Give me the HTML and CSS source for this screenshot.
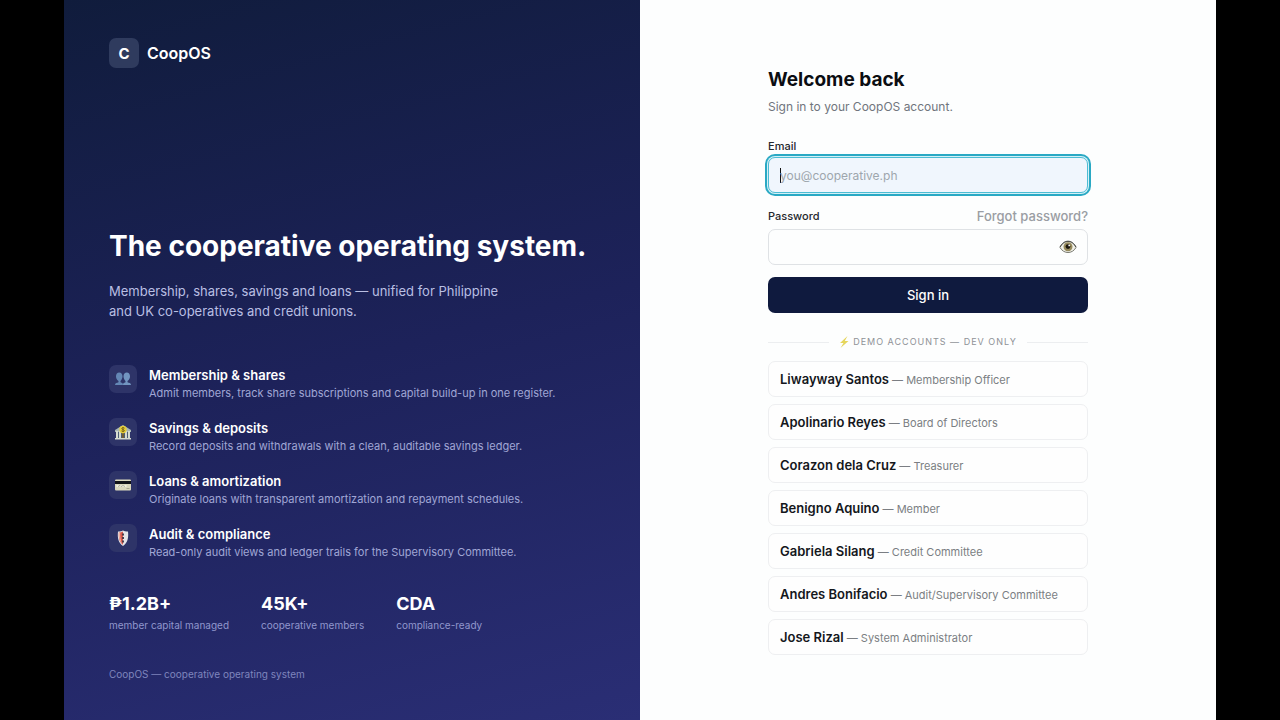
FILE: index.html
```html
<!DOCTYPE html>
<html lang="en">
  <head>
    <meta charset="utf-8">
    <meta name="viewport" content="width=device-width, initial-scale=1">
    <title>Sign in - CoopOS</title>
    <link rel="stylesheet" href="styles.css">
  </head>
  <body>
    <div class="auth">
      <section class="brand-panel">
        <div class="brand">
          <span class="brand-mark">C</span>
          <span>CoopOS</span>
        </div>

        <div class="pitch">
          <h1>The cooperative operating system.</h1>
          <p class="lead">Membership, shares, savings and loans — unified for Philippine and UK co-operatives and credit unions.</p>

          <ul class="features">
            <li>
              <span class="feature-icon">
                <svg viewBox="0 0 18 18" width="18" height="18" aria-hidden="true">
                  <path fill="#6487b5" d="M1 15c0-2 2-2 3.500-2.700V11C2.600 9.600 2 8 2 6.200 2 4 3.300 2.500 5.200 2.500S8.500 4 8.500 6.200c0 1.800-.7 3.400-2 4.800v1.300C8 13 9 13 9 15z"/>
                  <path fill="#7295c0" d="M9 15c0-2 1-2 2.500-2.700V11c-1.300-1.400-2-3-2-4.800C9.500 4 10.900 2.500 12.800 2.500S16 4 16 6.200c0 1.800-.6 3.400-2.500 4.800v1.300C15 13 17 13 17 15z"/>
                </svg>
              </span>
              <div>
                <h2>Membership &amp; shares</h2>
                <p>Admit members, track share subscriptions and capital build-up in one register.</p>
              </div>
            </li>
            <li>
              <span class="feature-icon">
                <svg viewBox="0 0 18 18" width="18" height="18" aria-hidden="true">
                  <path fill="#a9b7b4" d="M1 7l8-5 8 5v2H1z"/>
                  <path fill="#4d5f74" d="M2 9h14v6H2z"/>
                  <path fill="#d5dbd1" d="M2 8h2v7H2zM5 8h2v7H5zM11 8h2v7h-2zM14 8h2v7h-2zM1 15h16v1.500H1z"/>
                  <path fill="#725f35" d="M8 10h2v5H8z"/>
                  <circle cx="9" cy="6.500" r="3.700" fill="#e5cf3c"/>
                  <path fill="none" stroke="#7d6715" stroke-width="1" d="M10.500 5.200C9.500 4.300 7.800 4.500 7.800 5.600c0 1.300 2.600.7 2.600 2 0 1.100-1.900 1.200-2.900.3M9 4v5"/>
                </svg>
              </span>
              <div>
                <h2>Savings &amp; deposits</h2>
                <p>Record deposits and withdrawals with a clean, auditable savings ledger.</p>
              </div>
            </li>
            <li>
              <span class="feature-icon">
                <svg viewBox="0 0 18 18" width="18" height="18" aria-hidden="true">
                  <rect x="1" y="3.500" width="16" height="11" rx="1" fill="#d9d7bd"/>
                  <path fill="#111318" d="M1 5h16v3H1z"/>
                  <path fill="#f0efdf" d="M2.500 9h10v2h-10z"/>
                  <path fill="none" stroke="#8f907f" stroke-width=".7" d="M4 10.500l2-1 1 1 2-1 2 1M12.500 12.500h3"/>
                </svg>
              </span>
              <div>
                <h2>Loans &amp; amortization</h2>
                <p>Originate loans with transparent amortization and repayment schedules.</p>
              </div>
            </li>
            <li>
              <span class="feature-icon">
                <svg viewBox="0 0 18 18" width="18" height="18" aria-hidden="true">
                  <path fill="#e4e5e8" d="M9 1.500c1.500 1 3.300 1.200 5 1 .7 6-.3 11.500-5 14.500-4.700-3-5.700-8.500-5-14.500 1.700.2 3.500 0 5-1z"/>
                  <path fill="#d7584b" d="M9 2.500v13.300C5.400 13 4.400 9 4.900 3.500 6.400 3.600 7.800 3.200 9 2.500z"/>
                  <path fill="#4b3c4b" d="M8 4.500h2v2H8zM8 8h2v2H8zM8 11.500h2v2H8z"/>
                  <path fill="#f0b1a5" d="M5 3.500h1.300c-.3 4.200.2 7.600 1.600 11C5.500 12 4.600 8.500 5 3.500z"/>
                </svg>
              </span>
              <div>
                <h2>Audit &amp; compliance</h2>
                <p>Read-only audit views and ledger trails for the Supervisory Committee.</p>
              </div>
            </li>
          </ul>

          <dl class="stats">
            <div>
              <dt>₱1.2B+</dt>
              <dd>member capital managed</dd>
            </div>
            <div>
              <dt>45K+</dt>
              <dd>cooperative members</dd>
            </div>
            <div>
              <dt>CDA</dt>
              <dd>compliance-ready</dd>
            </div>
          </dl>
        </div>

        <footer>CoopOS — cooperative operating system</footer>
      </section>

      <main class="form-panel">
        <div class="form-wrap">
          <h2 class="title">Welcome back</h2>
          <p class="subtitle">Sign in to your CoopOS account.</p>

          <form>
            <div class="label-row">
              <label for="email">Email</label>
            </div>
            <input class="email" id="email" type="email" placeholder="you@cooperative.ph" autofocus>

            <div class="label-row">
              <label for="password">Password</label>
              <a href="#">Forgot password?</a>
            </div>
            <div class="password-field">
              <input id="password" type="password">
              <button class="reveal" type="button" aria-label="Show password">
                <svg viewBox="0 0 18 14" width="18" height="14" aria-hidden="true">
                  <path fill="#f1f1e9" stroke="#77786f" stroke-width="1" d="M1 7.500C3 3.500 6 1.500 9 1.500s6 2 8 6c-2 3.500-5 5-8 5s-6-1.500-8-5z"/>
                  <circle cx="9" cy="6.800" r="4.500" fill="#968a5c"/>
                  <circle cx="9" cy="6.600" r="2.400" fill="#1c170f"/>
                  <circle cx="10.200" cy="5.400" r=".9" fill="#fff"/>
                  <path fill="none" stroke="#44453f" stroke-width="1" d="M1 7C3 3 6 1.200 9 1.200s6 1.800 8 5.800"/>
                </svg>
              </button>
            </div>

            <button class="submit" type="submit">Sign in</button>
          </form>

          <div class="divider">
            <span>
              <svg viewBox="0 0 10 12" width="10" height="12" aria-hidden="true">
                <path fill="#e6d65c" d="M8.500 0L1 7h3.500L1.500 12 9.500 5H5.800z"/>
              </svg>
              Demo accounts — dev only
            </span>
          </div>

          <div class="accounts">
            <button type="button"><strong>Liwayway Santos</strong> — Membership Officer</button>
            <button type="button"><strong>Apolinario Reyes</strong> — Board of Directors</button>
            <button type="button"><strong>Corazon dela Cruz</strong> — Treasurer</button>
            <button type="button"><strong>Benigno Aquino</strong> — Member</button>
            <button type="button"><strong>Gabriela Silang</strong> — Credit Committee</button>
            <button type="button"><strong>Andres Bonifacio</strong> — Audit/Supervisory Committee</button>
            <button type="button"><strong>Jose Rizal</strong> — System Administrator</button>
          </div>
        </div>
      </main>
    </div>
  </body>
</html>
```
FILE: styles.css
```css
* {
  box-sizing: border-box;
}

body {
  margin: 0;
  padding: 0 5%;
  background: #000;
  font-family: Inter, "Liberation Sans", sans-serif;
}

h1,
h2,
p,
ul,
dl,
dd {
  margin: 0;
  padding: 0;
}

button,
input {
  font-family: inherit;
}

.auth {
  display: grid;
  grid-template-columns: minmax(0, 1fr) minmax(0, 1fr);
  min-height: 100vh;
}

/* left side */

.brand-panel {
  display: flex;
  flex-direction: column;
  padding: 38px 45px;
  background: linear-gradient(165deg, #101c3c 0%, #1d225a 50%, #2a2e75 100%);
  color: #fff;
}

.brand {
  display: flex;
  align-items: center;
  gap: 8px;
  font-size: 16px;
  font-weight: 600;
}

.brand-mark {
  display: flex;
  align-items: center;
  justify-content: center;
  width: 30px;
  height: 30px;
  border-radius: 7px;
  background: #2f3b5e;
  font-size: 15px;
  font-weight: 700;
}

.pitch {
  margin-top: auto;

  h1 {
    font-size: 28px;
    line-height: 36px;
    font-weight: 700;
    white-space: nowrap;
  }
}

.lead {
  max-width: 390px;
  margin-top: 17px;
  color: #b9bfe3;
  font-size: 13px;
  line-height: 20px;
}

.features {
  display: grid;
  gap: 17px;
  margin-top: 44px;
  list-style: none;

  li {
    display: flex;
    gap: 12px;
  }

  h2 {
    font-size: 13px;
    line-height: 20px;
    font-weight: 600;
  }

  p {
    color: #a0a6d5;
    font-size: 11px;
    line-height: 16px;
  }
}

.feature-icon {
  display: flex;
  align-items: center;
  justify-content: center;
  width: 28px;
  height: 28px;
  border-radius: 7px;
  background: #2e3468;
}

.stats {
  display: flex;
  gap: 32px;
  margin-top: 32px;

  dt {
    font-size: 18px;
    line-height: 24px;
    font-weight: 700;
  }

  dd {
    margin-top: 1px;
    color: #9197cd;
    font-size: 10px;
    line-height: 16px;
  }
}

.brand-panel footer {
  margin-top: 33px;
  color: #7f85bd;
  font-size: 10px;
  line-height: 16px;
}

/* right side */

.form-panel {
  display: flex;
  align-items: center;
  justify-content: center;
  padding-top: 2px;
  background: #fdfefe;
}

.form-wrap {
  width: 100%;
  max-width: 320px;
}

.title {
  color: #0b0d12;
  font-size: 19px;
  line-height: 26px;
  font-weight: 700;
}

.subtitle {
  margin: 4px 0 18px;
  color: #70757d;
  font-size: 12px;
  line-height: 20px;
}

.label-row {
  display: flex;
  align-items: center;
  justify-content: space-between;
  height: 22px;

  label {
    color: #25282d;
    font-size: 11px;
    font-weight: 500;
  }

  a {
    color: #9a9da3;
    font-size: 13px;
    font-weight: 500;
    text-decoration: none;
  }
}

input {
  display: block;
  width: 100%;
  height: 36px;
  padding: 0 11px;
  border: 1px solid #dfe2e5;
  border-radius: 7px;
  outline: none;
  background: #fdfefe;
  font-size: 12px;

  &::placeholder {
    color: #9ea6ad;
  }
}

/* focused look, with a caret that does not blink */
.email {
  margin-bottom: 12px;
  border-color: #4dbcd4;
  background: linear-gradient(#111, #111) 11px center / 1px 15px no-repeat #f0f6fd;
  box-shadow: 0 0 0 1px #d3f1f7, 0 0 0 3px #2aa9c4;
  caret-color: transparent;
}

.password-field {
  position: relative;
  margin-top: 2px;
}

.reveal {
  position: absolute;
  top: 0;
  right: 4px;
  display: flex;
  align-items: center;
  justify-content: center;
  width: 32px;
  height: 36px;
  padding: 0;
  border: 0;
  background: none;
}

.submit {
  width: 100%;
  height: 36px;
  margin-top: 12px;
  border: 0;
  border-radius: 7px;
  background: #0f1a3e;
  color: #fff;
  font-size: 13px;
  font-weight: 500;
}

.divider {
  display: flex;
  align-items: center;
  gap: 10px;
  margin: 21px 0 11px;
  color: #8f9297;
  font-size: 9px;
  line-height: 16px;
  letter-spacing: 1px;
  text-transform: uppercase;

  &::before,
  &::after {
    content: "";
    flex: 1;
    height: 1px;
    background: #eceef0;
  }

  span {
    display: flex;
    align-items: center;
    gap: 4px;
  }
}

.accounts {
  display: grid;
  gap: 7px;

  button {
    height: 36px;
    padding: 0 11px;
    border: 1px solid #eeeff1;
    border-radius: 7px;
    background: #fefefe;
    color: #7b7e83;
    font-size: 11px;
    text-align: left;
  }

  strong {
    color: #14171c;
    font-size: 13px;
    font-weight: 600;
  }
}
```
